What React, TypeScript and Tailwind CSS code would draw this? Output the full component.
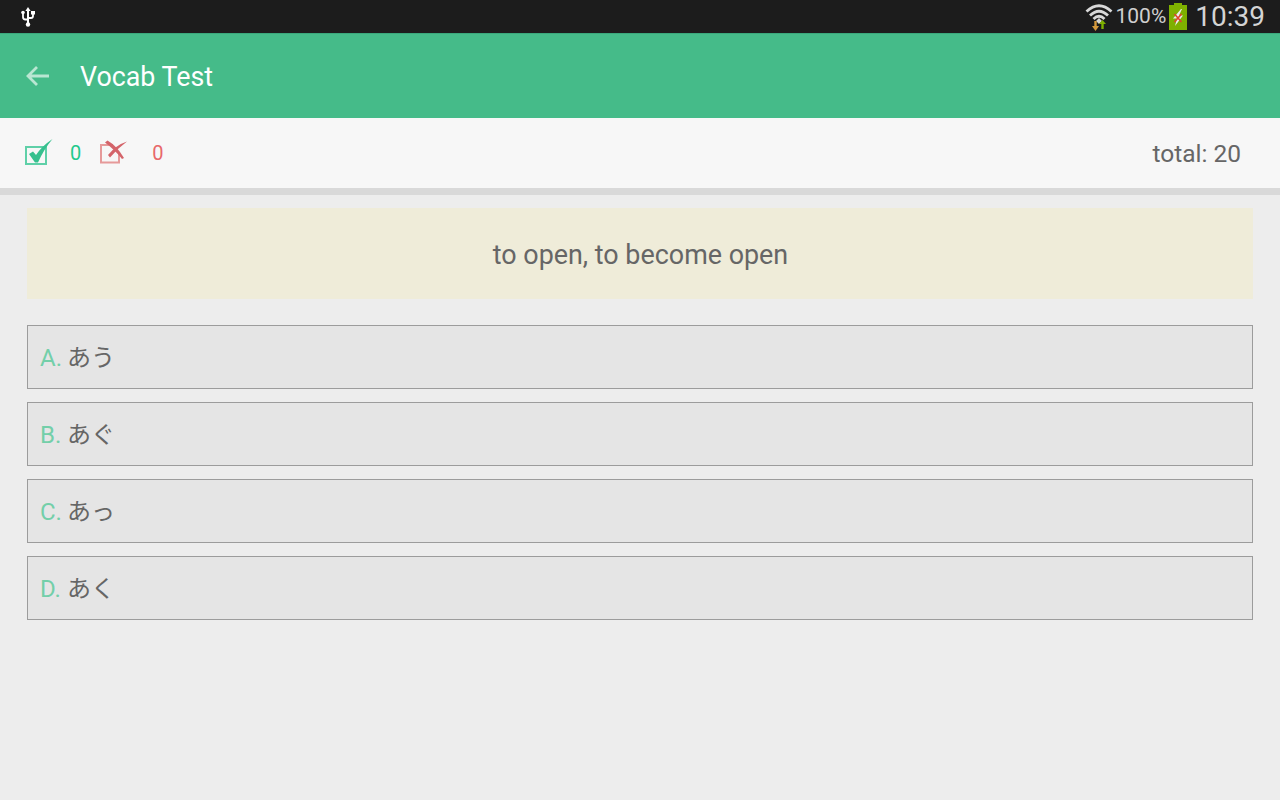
import React from "react";

const font = "[font-family:Roboto,'Noto_Sans_CJK_JP',sans-serif]";

function Option({ letter, text }: { letter: string; text: string }) {
  return (
    <div className="flex h-16 items-center border border-[#9c9c9c] bg-[#e5e5e5] pl-3 pt-[2px] text-[24px]">
      <span className="w-[27px] text-[#73cfa9]">{letter}</span>
      <span className="text-[#666666]">{text}</span>
    </div>
  );
}

export default function App() {
  return (
    <div className={`flex h-[800px] w-[1280px] flex-col overflow-hidden bg-[#ededed] ${font}`}>
      <div className="flex h-[33px] items-center justify-between bg-[#1c1c1c] pl-[21px] pr-[15px]">
        <svg width="14" height="20" viewBox="0 0 14 20" fill="none">
          <path d="M7 0 L4.4 4 H9.6 Z" fill="#fff" />
          <path d="M7 3 V18" stroke="#fff" strokeWidth="2" />
          <circle cx="7" cy="17.5" r="2.2" fill="#fff" />
          <path d="M2 6 V10 Q2 12.5 4.5 12.5 H7" stroke="#fff" strokeWidth="1.8" />
          <path d="M12 6 V9 Q12 11 10 11 H7" stroke="#fff" strokeWidth="1.8" />
          <circle cx="2" cy="5.5" r="1.8" fill="#fff" />
          <rect x="10" y="4" width="4" height="3.5" fill="#fff" />
        </svg>
        <div className="flex items-center">
          <svg width="28" height="30" viewBox="0 0 28 30" fill="none">
            <path d="M1.5 9.5 Q14 -2 26.5 9.5" stroke="#d8d8d8" strokeWidth="2.8" />
            <path d="M5 13.5 Q14 5 23 13.5" stroke="#d8d8d8" strokeWidth="2.8" />
            <path d="M8.5 17 Q14 11.5 19.5 17" stroke="#d8d8d8" strokeWidth="2.8" />
            <path d="M11 19 L14 16 L17 19 L14 22 Z" fill="#d8d8d8" />
            <path d="M10.5 19 V25" stroke="#d59a3c" strokeWidth="2.4" />
            <path d="M7 24 H14 L10.5 29 Z" fill="#d59a3c" />
            <path d="M17.5 27 V21" stroke="#7fb000" strokeWidth="2.4" />
            <path d="M14 22 H21 L17.5 18 Z" fill="#7fb000" />
          </svg>
          <span className="ml-[2px] text-[21px] leading-none text-[#cfcfcf]">100%</span>
          <svg className="ml-[3px]" width="18" height="27" viewBox="0 0 18 27" fill="none">
            <rect x="5" y="0" width="8" height="3" fill="#7fb000" />
            <rect x="0" y="2" width="18" height="25" fill="#7fb000" />
            <path d="M12 6 L4 15.5 H8 L6 23 L14 12.5 H10 L13 6 Z" fill="#ececec" />
            <path d="M5.5 11 L12.5 19 M12.5 11 L5.5 19" stroke="#e0442c" strokeWidth="1.6" />
          </svg>
          <span className="ml-[8px] text-[28px] leading-none text-[#d4d4d4]">10:39</span>
        </div>
      </div>
      <div className="flex h-[85px] items-center border-t border-[#3aa87c] bg-[#45bb89] pl-[25px]">
        <svg width="26" height="24" viewBox="0 0 26 24" fill="none">
          <path d="M24 12 H3 M12 3 L3 12 L12 21" stroke="#b9e6d2" strokeWidth="2.8" />
        </svg>
        <span className="ml-[29px] pt-[2px] text-[26.8px] text-white">Vocab Test</span>
      </div>
      <div className="flex h-[77px] items-center justify-between border-b-[7px] border-[#d9d9d9] bg-[#f7f7f7] pl-[25px] pr-[39px]">
        <div className="flex items-center">
          <svg width="28" height="28" viewBox="0 0 28 28" fill="none">
            <path d="M1 8 H21 V25 H1 Z" stroke="#5fd0a8" strokeWidth="2" />
            <path d="M4 15 L8 12.5 L11 16 Q17 7 27.5 0 Q19 10 13 23.5 H10 Z" fill="#36c08e" />
          </svg>
          <span className="ml-[17px] text-[20px] text-[#22c98c]">0</span>
          <svg className="ml-[19px]" width="28" height="26" viewBox="0 0 28 26" fill="none">
            <path d="M13 5 H1 V22.5 H19 V12" stroke="#e69a9a" strokeWidth="2" />
            <path d="M5 2.5 L7.5 0.5 Q17 6 24 18 L22 19 Q15 10 5 2.5 Z" fill="#d4646a" />
            <path d="M8 15 Q16 5 27 1.5 Q18 8 10 17.5 Z" fill="#d4646a" />
          </svg>
          <span className="ml-[24px] text-[20px] text-[#e8686a]">0</span>
        </div>
        <span className="translate-y-px text-[24.5px] text-[#666666]">total: 20</span>
      </div>
      <div className="flex flex-col px-[27px] pt-[13px]">
        <div className="flex h-[91px] items-center justify-center bg-[#efecd9] pl-[1px] pt-[3px] text-[26.9px] text-[#666666]">
          to open, to become open
        </div>
        <div className="mt-[26px] flex flex-col gap-[13px]">
          <Option letter="A." text="あう" />
          <Option letter="B." text="あぐ" />
          <Option letter="C." text="あっ" />
          <Option letter="D." text="あく" />
        </div>
      </div>
    </div>
  );
}
